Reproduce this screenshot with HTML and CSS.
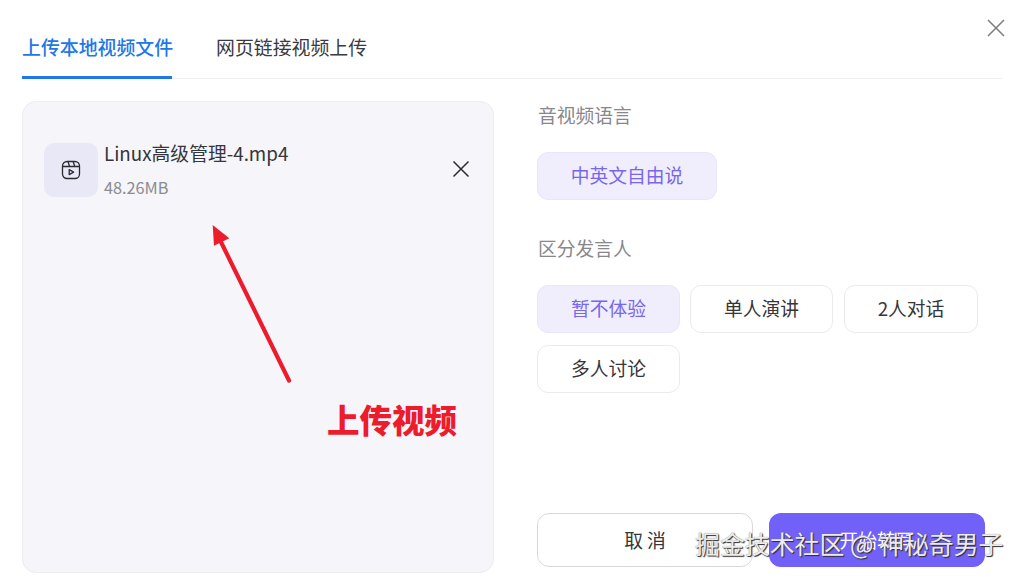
FILE: index.html
```html
<!DOCTYPE html>
<html lang="zh-CN">
<head>
<meta charset="utf-8">
<title>上传本地视频文件</title>
<link rel="stylesheet" href="styles.css">
</head>
<body>
<div class="modal">
  <svg class="modal-close" width="18" height="18" viewBox="0 0 18 18"><path d="M1 1L17 17M17 1L1 17"/></svg>
  <nav class="tabs">
    <div class="tab tab-active">上传本地视频文件</div>
    <div class="tab">网页链接视频上传</div>
  </nav>
  <main class="body">
    <section class="panel">
      <div class="file">
        <div class="file-icon">
          <svg width="20" height="20" viewBox="0 0 20 20"><rect x="1.5" y="1.5" width="17" height="17" rx="4.5"/><path d="M1.8 6.5H18.2M7 1.7L8.6 6.5M12.2 1.7L13.8 6.5M8.2 9.6V14.6L12.6 12.1Z"/></svg>
        </div>
        <div class="file-info">
          <div class="file-name">Linux高级管理-4.mp4</div>
          <div class="file-size">48.26MB</div>
        </div>
        <svg class="file-remove" width="18" height="18" viewBox="0 0 18 18"><path d="M1.5 1.5L16.5 16.5M16.5 1.5L1.5 16.5"/></svg>
      </div>
    </section>
    <section class="options">
      <h2 class="label">音视频语言</h2>
      <div class="chips chips-lang">
        <div class="chip chip-on chip-wide">中英文自由说</div>
      </div>
      <h2 class="label label-second">区分发言人</h2>
      <div class="chips">
        <div class="chip chip-on">暂不体验</div>
        <div class="chip">单人演讲</div>
        <div class="chip chip-narrow">2人对话</div>
        <div class="chip">多人讨论</div>
      </div>
      <div class="actions">
        <div class="btn btn-cancel">取 消</div>
        <div class="btn btn-primary">开始转写</div>
      </div>
    </section>
  </main>
  <svg class="arrow" width="100" height="170" viewBox="0 0 100 170"><path class="arrow-line" d="M89 158.5L20 18"/><path class="arrow-head" d="M12.7 3L29.3 16.3L14 23.7Z"/></svg>
  <div class="note">上传视频</div>
  <div class="watermark">掘金技术社区 @ 神秘奇男子</div>
</div>
</body>
</html>
```
FILE: styles.css
```css
* { box-sizing: border-box; }
html, body { margin: 0; height: 100%; }
body {
  background: #fff;
  font-family: "Noto Sans CJK SC", "Noto Sans", sans-serif;
  color: #2b2b30;
  overflow: hidden;
}
.modal {
  position: relative;
  width: 1024px;
  height: 577px;
  padding: 0 22px 4px;
  display: flex;
  flex-direction: column;
}
.modal-close {
  position: absolute;
  left: 987px;
  top: 19px;
  fill: none;
  stroke: #808084;
  stroke-width: 1.6;
}
.tabs {
  display: flex;
  gap: 44px;
  height: 79px;
  flex: none;
  border-bottom: 1px solid #f0f0f3;
}
.tab {
  width: 150px;
  height: 79px;
  padding-top: 33px;
  font-size: 18.9px;
  line-height: 28px;
  white-space: nowrap;
  color: #3a3a40;
}
.tab-active {
  color: #2277e8;
  font-weight: 500;
  border-bottom: 3px solid #2277e8;
}
.body {
  flex: 1;
  display: flex;
  gap: 43px;
  margin-top: 22px;
  min-height: 0;
}
.panel {
  width: 472px;
  flex: none;
  background: #f5f5fa;
  border: 1px solid #ececf1;
  border-radius: 14px;
  padding: 41px 21px 0 21px;
}
.file {
  display: flex;
  align-items: flex-start;
}
.file-icon {
  width: 54px;
  height: 54px;
  flex: none;
  border-radius: 10px;
  background: #e9e8f7;
  display: flex;
  align-items: center;
  justify-content: center;
}
.file-icon svg {
  fill: none;
  stroke: #2b2b30;
  stroke-width: 1.3;
  stroke-linejoin: round;
}
.file-info {
  flex: 1;
  margin-left: 6px;
}
.file-name {
  font-size: 18.8px;
  line-height: 24px;
  margin-top: -2px;
  color: #35353a;
}
.file-size {
  font-size: 16.25px;
  line-height: 22px;
  margin-top: 11px;
  color: #8b8b90;
}
.file-remove {
  margin-top: 17px;
  margin-right: 2px;
  fill: none;
  stroke: #2b2b30;
  stroke-width: 1.5;
}
.options {
  flex: 1;
  display: flex;
  flex-direction: column;
  min-width: 0;
}
.label {
  margin: 0;
  font-size: 18.75px;
  font-weight: 400;
  line-height: 28px;
  color: #87878c;
  margin-left: 1px;
  height: 28px;
}
.label-second { margin-top: 34px; }
.chips {
  display: flex;
  flex-wrap: wrap;
  gap: 12px 10px;
  width: 460px;
  margin-top: 23px;
}
.chips-lang { margin-top: 23px; }
.chip {
  width: 143px;
  height: 48px;
  border: 1px solid #ebebee;
  border-radius: 11px;
  background: #fff;
  font-size: 18.75px;
  line-height: 44px;
  text-align: center;
  color: #35353a;
}
.chip-narrow { width: 134px; margin-left: 1px; }
.chip-wide { width: 180px; }
.chip-on {
  background: #f0eefc;
  border-color: #e9e6f8;
  color: #7967ea;
}
.actions {
  margin-top: auto;
  display: flex;
  gap: 16px;
  margin-bottom: 6px;
}
.btn {
  width: 216px;
  height: 54px;
  border-radius: 12px;
  font-size: 18.75px;
  line-height: 52px;
  text-align: center;
}
.btn-cancel {
  background: #fff;
  border: 1px solid #d9d9dc;
  color: #35353a;
}
.btn-primary {
  background: #7161f8;
  color: #fff;
  line-height: 54px;
}
.arrow {
  position: absolute;
  left: 200px;
  top: 222px;
}
.arrow-line {
  fill: none;
  stroke: #ec1c2c;
  stroke-width: 4.2;
  stroke-linecap: round;
}
.arrow-head { fill: #ec1c2c; }
.note {
  position: absolute;
  left: 327px;
  top: 396px;
  font-size: 32.5px;
  line-height: 46px;
  font-weight: 900;
  color: #ec1c2c;
}
.watermark {
  position: absolute;
  left: 695px;
  top: 525px;
  font-size: 24.9px;
  line-height: 36px;
  white-space: nowrap;
  color: #ececee;
  text-shadow: 1px 1px 1px #2a2a2a, 0 0 1px #777;
}
```
